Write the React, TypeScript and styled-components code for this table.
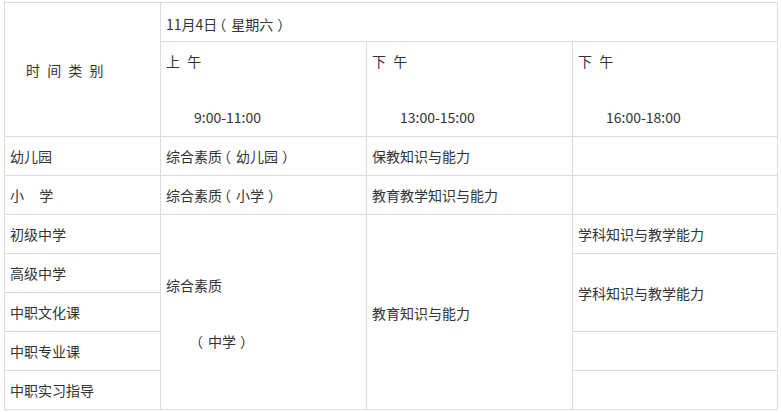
import React from 'react';
import styled, { createGlobalStyle } from 'styled-components';

const GlobalStyle = createGlobalStyle`
  body {
    margin: 0;
    background: #fff;
    font-family: "Noto Sans CJK SC", "Noto Sans", sans-serif;
    color: #333;
  }
`;

const Page = styled.div`
  padding: 2px 0 0 4px;
`;

// one grid for the whole schedule, 1px gaps show the border colour
const ScheduleGrid = styled.div`
  display: grid;
  grid-template-columns: 155px 205px 205px 204px;
  grid-template-rows: 38px 94px repeat(7, 38px);
  gap: 1px;
  padding: 1px;
  background: #dcdcdc;
  width: max-content;
`;

const Cell = styled.div<{ $col: string; $row: string; $pad?: number; $top?: number }>`
  grid-column: ${(p) => p.$col};
  grid-row: ${(p) => p.$row};
  background: #fff;
  display: flex;
  flex-direction: column;
  justify-content: center;
  padding: ${(p) => p.$top ?? 0}px 5px 0 ${(p) => p.$pad ?? 5}px;
  font-size: 14px;
  line-height: 28px;
  white-space: nowrap;
`;

const Spaced = styled.span<{ $space: number }>`
  word-spacing: ${(p) => p.$space}px;
`;

const Paren = styled.span<{ $before: number; $after: number }>`
  font-feature-settings: "halt";
  padding: 0 ${(p) => p.$after}px 0 ${(p) => p.$before}px;
`;

const Blank = styled.div`
  height: 28px;
`;

const Indented = styled.div`
  padding-left: 28px;
`;

const sessions = [
  { col: '2', time: '9:00-11:00', label: '上 午' },
  { col: '3', time: '13:00-15:00', label: '下 午' },
  { col: '4', time: '16:00-18:00', label: '下 午' },
];

const middleLevels = ['初级中学', '高级中学', '中职文化课', '中职专业课', '中职实习指导'];

const Bracketed = ({ head, inner }: { head: string; inner: string }) => (
  <span>
    {head}
    <Paren $before={2} $after={5}>（</Paren>
    {inner}
    <Paren $before={4} $after={3}>）</Paren>
  </span>
);

export default function App() {
  return (
    <Page>
      <GlobalStyle />
      <ScheduleGrid>
        <Cell $col="1" $row="1 / 3" $pad={21}>
          <Spaced $space={4}>时 间 类 别</Spaced>
        </Cell>
        <Cell $col="2 / 5" $row="1" $top={3}>
          <Bracketed head="11月4日" inner="星期六" />
        </Cell>

        {sessions.map((s) => (
          <Cell key={s.col} $col={s.col} $row="2">
            <Spaced $space={4}>{s.label}</Spaced>
            <Blank />
            <Indented>{s.time}</Indented>
          </Cell>
        ))}

        <Cell $col="1" $row="3">幼儿园</Cell>
        <Cell $col="2" $row="3">
          <Bracketed head="综合素质" inner="幼儿园" />
        </Cell>
        <Cell $col="3" $row="3">保教知识与能力</Cell>
        <Cell $col="4" $row="3" />

        <Cell $col="1" $row="4">
          <Spaced $space={12}>小 学</Spaced>
        </Cell>
        <Cell $col="2" $row="4">
          <Bracketed head="综合素质" inner="小学" />
        </Cell>
        <Cell $col="3" $row="4">教育教学知识与能力</Cell>
        <Cell $col="4" $row="4" />

        {middleLevels.map((name, i) => (
          <Cell key={name} $col="1" $row={String(5 + i)}>
            {name}
          </Cell>
        ))}

        <Cell $col="2" $row="5 / 10" $top={2}>
          <div>综合素质</div>
          <Blank />
          <Indented>
            <Bracketed head="" inner="中学" />
          </Indented>
        </Cell>
        <Cell $col="3" $row="5 / 10" $top={2}>教育知识与能力</Cell>

        <Cell $col="4" $row="5">学科知识与教学能力</Cell>
        <Cell $col="4" $row="6 / 8">学科知识与教学能力</Cell>
        <Cell $col="4" $row="8" />
        <Cell $col="4" $row="9" />
      </ScheduleGrid>
    </Page>
  );
}
